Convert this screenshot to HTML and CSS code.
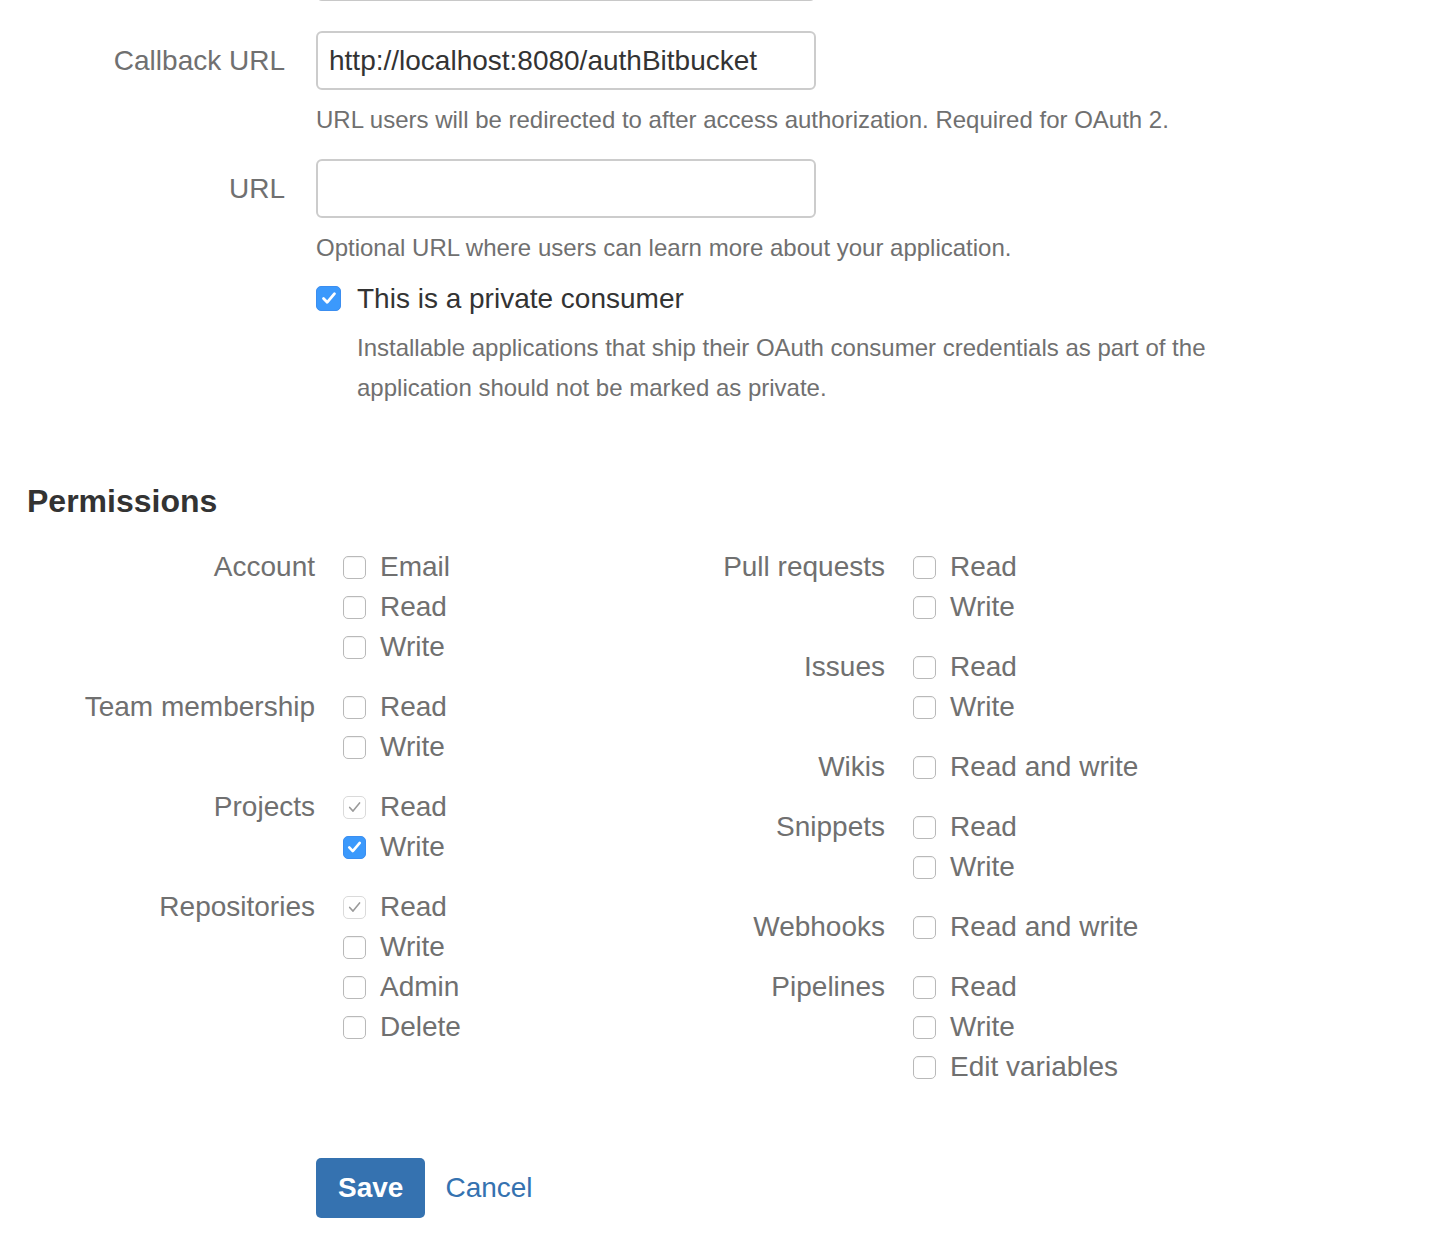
FILE: index.html
```html
<!DOCTYPE html>
<html lang="en">
<head>
<meta charset="utf-8">
<title>OAuth consumer</title>
<link rel="stylesheet" href="styles.css">
</head>
<body>
<div class="page">
  <div class="tail"></div>

  <div class="field first">
    <label class="flabel">Callback URL</label>
    <div class="fbody">
      <input class="text" type="text" value="http://localhost:8080/authBitbucket">
      <div class="help">URL users will be redirected to after access authorization. Required for OAuth 2.</div>
    </div>
  </div>

  <div class="field">
    <label class="flabel">URL</label>
    <div class="fbody">
      <input class="text" type="text" value="">
      <div class="help">Optional URL where users can learn more about your application.</div>
    </div>
  </div>

  <div class="private">
    <div class="private-row">
      <span class="cb on"><svg viewBox="0 0 24 24"><path d="M6 12.5l4 4.2 8-9.4"/></svg></span>
      <span class="private-label">This is a private consumer</span>
    </div>
    <div class="private-desc">Installable applications that ship their OAuth consumer credentials as part of the application should not be marked as private.</div>
  </div>

  <h2 class="perm-title">Permissions</h2>

  <div class="perms">
    <div class="pcol">
      <div class="pgroup">
        <div class="plabel">Account</div>
        <div class="opts">
          <div class="opt"><span class="cb"></span><span class="otext">Email</span></div>
          <div class="opt"><span class="cb"></span><span class="otext">Read</span></div>
          <div class="opt"><span class="cb"></span><span class="otext">Write</span></div>
        </div>
      </div>
      <div class="pgroup">
        <div class="plabel">Team membership</div>
        <div class="opts">
          <div class="opt"><span class="cb"></span><span class="otext">Read</span></div>
          <div class="opt"><span class="cb"></span><span class="otext">Write</span></div>
        </div>
      </div>
      <div class="pgroup">
        <div class="plabel">Projects</div>
        <div class="opts">
          <div class="opt"><span class="cb dis"><svg viewBox="0 0 24 24"><path d="M6.5 12.5l3.8 4.2 7.5-9.4"/></svg></span><span class="otext">Read</span></div>
          <div class="opt"><span class="cb on"><svg viewBox="0 0 24 24"><path d="M6 12.5l4 4.2 8-9.4"/></svg></span><span class="otext">Write</span></div>
        </div>
      </div>
      <div class="pgroup">
        <div class="plabel">Repositories</div>
        <div class="opts">
          <div class="opt"><span class="cb dis"><svg viewBox="0 0 24 24"><path d="M6.5 12.5l3.8 4.2 7.5-9.4"/></svg></span><span class="otext">Read</span></div>
          <div class="opt"><span class="cb"></span><span class="otext">Write</span></div>
          <div class="opt"><span class="cb"></span><span class="otext">Admin</span></div>
          <div class="opt"><span class="cb"></span><span class="otext">Delete</span></div>
        </div>
      </div>
    </div>

    <div class="pcol">
      <div class="pgroup">
        <div class="plabel">Pull requests</div>
        <div class="opts">
          <div class="opt"><span class="cb"></span><span class="otext">Read</span></div>
          <div class="opt"><span class="cb"></span><span class="otext">Write</span></div>
        </div>
      </div>
      <div class="pgroup">
        <div class="plabel">Issues</div>
        <div class="opts">
          <div class="opt"><span class="cb"></span><span class="otext">Read</span></div>
          <div class="opt"><span class="cb"></span><span class="otext">Write</span></div>
        </div>
      </div>
      <div class="pgroup">
        <div class="plabel">Wikis</div>
        <div class="opts">
          <div class="opt"><span class="cb"></span><span class="otext">Read and write</span></div>
        </div>
      </div>
      <div class="pgroup">
        <div class="plabel">Snippets</div>
        <div class="opts">
          <div class="opt"><span class="cb"></span><span class="otext">Read</span></div>
          <div class="opt"><span class="cb"></span><span class="otext">Write</span></div>
        </div>
      </div>
      <div class="pgroup">
        <div class="plabel">Webhooks</div>
        <div class="opts">
          <div class="opt"><span class="cb"></span><span class="otext">Read and write</span></div>
        </div>
      </div>
      <div class="pgroup">
        <div class="plabel">Pipelines</div>
        <div class="opts">
          <div class="opt"><span class="cb"></span><span class="otext">Read</span></div>
          <div class="opt"><span class="cb"></span><span class="otext">Write</span></div>
          <div class="opt"><span class="cb"></span><span class="otext">Edit variables</span></div>
        </div>
      </div>
    </div>
  </div>

  <div class="actions">
    <button class="btn-save" type="button">Save</button>
    <a class="cancel" href="#">Cancel</a>
  </div>
</div>
</body>
</html>
```
FILE: styles.css
```css
html, body {
  margin: 0;
  padding: 0;
  background: #fff;
}
body {
  font-family: "Liberation Sans", Arial, Helvetica, sans-serif;
  color: #333;
  overflow: hidden;
}
.page {
  width: 1430px;
  height: 1236px;
}
.tail {
  width: 500px;
  height: 8px;
  margin: -7px 0 0 316px;
  box-sizing: border-box;
  border: 2px solid #c8c8c8;
  border-top: none;
  border-radius: 0 0 6px 6px;
}
.field {
  display: grid;
  grid-template-columns: 285px 500px;
  column-gap: 31px;
  margin-top: 19px;
}
.field.first {
  margin-top: 30px;
}
.flabel {
  text-align: right;
  font-size: 28px;
  line-height: 60px;
  height: 59px;
  color: #707070;
}
.text {
  display: block;
  width: 500px;
  height: 59px;
  box-sizing: border-box;
  border: 2px solid #ccc;
  border-radius: 6px;
  padding: 0 11px;
  font-family: inherit;
  font-size: 28px;
  color: #333;
  background: #fff;
  outline: none;
}
.help {
  margin-top: 10px;
  font-size: 24px;
  line-height: 40px;
  color: #707070;
  white-space: nowrap;
}
.private {
  margin: 10px 0 0 316px;
}
.private-row {
  display: flex;
  align-items: center;
  height: 40px;
}
.private-label {
  margin-left: 16px;
  font-size: 28px;
  line-height: 42px;
  height: 40px;
  color: #333;
}
.private-desc {
  margin: 10px 0 0 41px;
  width: 900px;
  font-size: 24px;
  line-height: 40px;
  color: #707070;
}
.cb {
  flex: none;
  width: 23px;
  height: 23px;
  box-sizing: border-box;
  border: 1.5px solid #b9b9b9;
  border-radius: 5px;
  background: #fff;
  box-shadow: inset 0 1px 1px rgba(0,0,0,0.06);
  display: flex;
  align-items: center;
  justify-content: center;
}
.cb svg {
  width: 22px;
  height: 22px;
  fill: none;
  stroke-linecap: round;
  stroke-linejoin: round;
}
.cb.on {
  background: #3b99fc;
  border-color: #3b8ef0;
  box-shadow: none;
}
.cb.on svg path {
  stroke: #fff;
  stroke-width: 3;
}
.cb.dis {
  border-color: #dadada;
  box-shadow: none;
}
.cb.dis svg path {
  stroke: #9a9a9a;
  stroke-width: 1.8;
}
.private-row .cb {
  width: 25px;
  height: 25px;
}
.perm-title {
  margin: 73px 0 0 27px;
  font-size: 32px;
  line-height: 40px;
  font-weight: bold;
  color: #333;
}
.perms {
  display: flex;
  margin: 25px 0 0 27px;
}
.pcol {
  width: 570px;
  display: flex;
  flex-direction: column;
  gap: 20px;
}
.pgroup {
  display: flex;
  align-items: flex-start;
}
.plabel {
  width: 288px;
  flex: none;
  text-align: right;
  font-size: 28px;
  line-height: 42px;
  height: 40px;
  color: #707070;
  white-space: nowrap;
}
.opts {
  margin-left: 28px;
}
.opt {
  display: flex;
  align-items: center;
  height: 40px;
}
.opt .cb {
  margin-top: 2px;
}
.otext {
  margin-left: 14px;
  font-size: 28px;
  line-height: 42px;
  height: 40px;
  color: #707070;
}
.actions {
  display: flex;
  align-items: center;
  margin: 72px 0 0 316px;
}
.btn-save {
  height: 60px;
  padding: 0 22px;
  border: none;
  border-radius: 5px;
  background: #3572b0;
  color: #fff;
  font-family: inherit;
  font-size: 28px;
  font-weight: bold;
}
.cancel {
  margin-left: 20px;
  font-size: 28px;
  color: #3572b0;
  text-decoration: none;
}
```
